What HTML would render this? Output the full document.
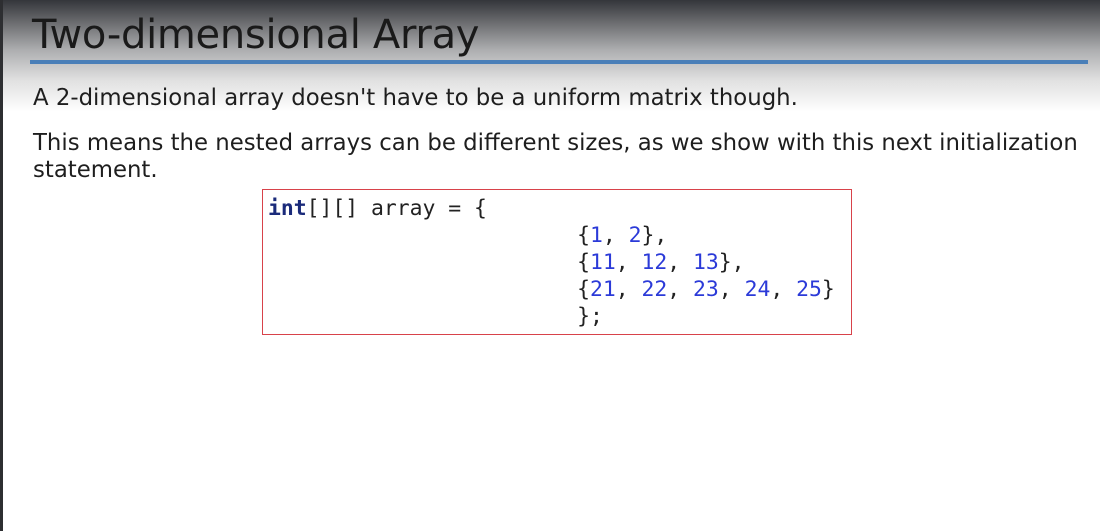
<!DOCTYPE html>
<html><head><style>
html,body{margin:0;padding:0}
body{width:1100px;height:531px;overflow:hidden;position:relative;background:#fff;font-family:"DejaVu Sans","Liberation Sans",sans-serif;color:#1e1e1e}
.bg{position:absolute;left:0;top:0;width:1100px;height:120px;background:linear-gradient(#34363b 0px,#6a6b6e 22px,#adaeb0 50px,#e0e0e0 80px,#fff 112px)}
.edge{position:absolute;left:0;top:0;width:3px;height:531px;background:#2d2e31}
.title{position:absolute;left:32px;top:12px;font-size:40px;color:#1a1a1a;white-space:nowrap;letter-spacing:-0.3px}
.line{position:absolute;left:30px;top:60px;width:1058px;height:4px;background:#4a7fb8}
.p{position:absolute;left:33px;font-size:22.8px;white-space:nowrap;color:#1e1e1e}
.box{position:absolute;left:262px;top:189px;width:588px;height:144px;border:1.5px solid #d8424a}
pre{position:absolute;left:268px;top:195px;margin:0;font-family:"DejaVu Sans Mono","Liberation Mono",monospace;font-size:21.4px;line-height:27px;color:#222}
b{color:#1a2a7a}
.n{color:#2b3ad8}
</style></head><body>
<div class="bg"></div>
<div class="edge"></div>
<div class="title">Two-dimensional Array</div>
<div class="line"></div>
<div class="p" style="top:85px">A 2-dimensional array doesn't have to be a uniform matrix though.</div>
<div class="p" style="top:130px">This means the nested arrays can be different sizes, as we show with this next initialization</div>
<div class="p" style="top:157px">statement.</div>
<div class="box"></div>
<pre><b>int</b>[][] array = {
                        {<span class="n">1</span>, <span class="n">2</span>},
                        {<span class="n">11</span>, <span class="n">12</span>, <span class="n">13</span>},
                        {<span class="n">21</span>, <span class="n">22</span>, <span class="n">23</span>, <span class="n">24</span>, <span class="n">25</span>}
                        };</pre>
</body></html>
